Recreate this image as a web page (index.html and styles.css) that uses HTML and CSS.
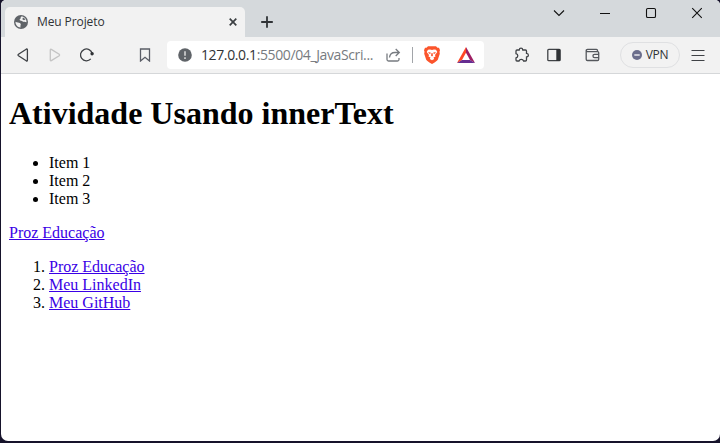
FILE: index.html
```html
<!DOCTYPE html>
<html lang="pt-BR">
<head>
<meta charset="utf-8">
<title>Meu Projeto</title>
<link rel="stylesheet" href="styles.css">
</head>
<body>
<div class="window">
  <header class="tabs">
    <div class="tab">
      <svg class="globe" width="14" height="14" viewBox="0 0 14 14"><circle cx="7" cy="7" r="7" fill="#5f6368"/><path d="M1.500 6.700C3 7.800 4.800 7 6.200 8.200S6 10.200 6.600 12.400C3.600 12.200 1.400 9.800 1.500 6.700ZM7.300 1.600C6 2.700 7.400 3.500 5.600 4.400 5 5.300 7 5.500 8.300 6.200 9.700 7.400 11 6.600 12.500 7.200 12.700 4.200 10.300 1.500 7.300 1.600Z" fill="#f2f2f2"/><path d="M9 2.500 8.300 4.300 10 5.200 11.600 4.300Z" fill="#5f6368"/></svg>
      <span class="tab-title">Meu Projeto</span>
      <svg class="tab-close" width="8" height="8" viewBox="0 0 8 8"><path d="M.7.7 7.300 7.300M7.300.7.7 7.300" stroke="#3c4043" stroke-width="1.700"/></svg>
    </div>
    <svg class="plus" width="12" height="12" viewBox="0 0 12 12"><path d="M6 .2V11.800M.2 6H11.800" stroke="#303336" stroke-width="1.800"/></svg>
    <div class="controls">
      <svg width="12" height="12" viewBox="0 0 12 12"><path d="m1 3.500 5 5 5-5"/></svg>
      <svg width="12" height="12" viewBox="0 0 12 12"><path d="M1 6.500H11"/></svg>
      <svg width="12" height="12" viewBox="0 0 12 12"><rect x="1.500" y="1.500" width="9" height="9" rx="1.300"/></svg>
      <svg width="12" height="12" viewBox="0 0 12 12"><path d="m1.200 1.200 9.600 9.600m0-9.600-9.600 9.600"/></svg>
    </div>
  </header>
  <nav class="toolbar">
    <svg class="back" width="12" height="14" viewBox="0 0 12 14"><path d="M9.200 1.200Q10.400.6 10.400 2V12Q10.400 13.400 9.200 12.800L1.500 7.800Q.6 7 1.500 6.200Z"/></svg>
    <svg class="forward" width="12" height="14" viewBox="0 0 12 14"><path d="M1.300 2Q1.300.8 2.300 1.400L10.200 6.200Q11 7 10.200 7.800L2.300 12.600Q1.300 13.200 1.300 12Z"/></svg>
    <svg class="reload" width="14" height="14" viewBox="0 0 14 14"><path d="M10.800 10.900A5.900 5.900 0 1 1 12.200 5.500"/><circle cx="12.100" cy="5.700" r="1.700" fill="#303336" stroke="none"/></svg>
    <svg class="bookmark" width="12" height="14" viewBox="0 0 12 14"><path d="M1.500 1h9v12L6 9.300 1.500 13Z"/></svg>
    <div class="address">
      <svg class="info" width="14" height="14" viewBox="0 0 14 14"><circle cx="7" cy="7" r="6.800" fill="#5f6368"/><path d="M7 3.300v4.500M7 9.300v1.700" stroke="#ddd" stroke-width="1.500"/></svg>
      <span class="url"><b>127.0.0.1</b>:5500/04_JavaScri...</span>
      <svg class="share" width="15" height="14" viewBox="0 0 15 14"><path d="M1 5.500v6q0 1.500 1.500 1.500h9q1.500 0 1.500-1.500V10M3.500 9.500Q4 4.500 9 4.500h4M9.700 1l3.600 3.500-3.600 3.500"/></svg>
      <i class="divider"></i>
      <svg class="brave" width="16" height="18" viewBox="0 0 16 18"><path d="m4 .3h8l1.500 1.500 1.500-.1 1 2.500-.5 1.500.3 2-2 6Q13 15 8 18 3 15 2.200 13.700l-2-6 .3-2L0 4.200l1-2.500 1.500.1Z" fill="#fb542b"/><path d="M4 3.700 6 3.500l2 .5 2-.5 2 .2 1.300 2.200-2.300 3 .5 1.500-2 1 .7 1.500L8 14.300l-2.200-1.400.7-1.500-2-1 .5-1.500-2.300-3Z" fill="#fff"/><path d="m4.300 6 2.700.7L6 8 4.700 7.200Zm7.400 0-2.700.7L10 8l1.300-.8ZM7.500 7h1l.5 2.600L8 10.500 7 9.600Z" fill="#fb542b"/></svg>
      <svg class="bat" width="18" height="16" viewBox="0 0 18 16"><path d="M9 0 0 16 5 13 9 5.800Z" fill="#ff4724"/><path d="M9 0V5.800L13 13 18 16Z" fill="#9e1f63"/><path d="M0 16 5 13h8l5 3Z" fill="#662d91"/></svg>
    </div>
    <svg class="puzzle" width="16" height="16" viewBox="0 0 16 16"><path d="M3 3H5.200Q5.400 1.200 7 1.200T8.800 3H11.500Q12.500 3 12.500 4V6.400Q14.400 6.500 14.400 8.200T12.500 10V13Q12.500 14 11.500 14H9.600Q9 12.400 7.300 12.400T5 14H3Q2 14 2 13V11Q3.800 10.500 3.800 8.800T2 6.700V4Q2 3 3 3Z"/></svg>
    <svg class="sidebar" width="14" height="14" viewBox="0 0 14 14"><rect x=".8" y="1.300" width="12.400" height="11.400" rx="1"/><path d="M9.300 1H13v12H9.300Z" fill="#303336" stroke="none"/></svg>
    <svg class="wallet" width="16" height="14" viewBox="0 0 16 14"><path d="M12.500 3.500V2.500Q12.500 1.400 11.400 1.400H2.500Q1.200 1.400 1.200 2.600V11.200Q1.200 12.500 2.500 12.500H12.500Q13.700 12.500 13.700 11.300V4.700Q13.700 3.600 12.600 3.600H2.500Q1.200 3.600 1.200 2.600M14 6.300H9.500Q8 6.300 8 8t1.500 1.700H14"/></svg>
    <div class="vpn"><svg width="10" height="10" viewBox="0 0 10 10"><circle cx="5" cy="5" r="5" fill="#6b6e8c" stroke="none"/><path d="M2.300 5h5.400" stroke="#e8e8ee" stroke-width="1.500"/></svg><span>VPN</span></div>
    <svg class="menu" width="14" height="12" viewBox="0 0 14 12"><path d="M.5 1.500h13M.5 6.500h13M.5 11.500h13"/></svg>
  </nav>
  <main>
    <h1>Atividade Usando innerText</h1>
    <ul><li>Item 1</li><li>Item 2</li><li>Item 3</li></ul>
    <a href="#">Proz Educação</a>
    <ol><li><a href="#">Proz Educação</a></li><li><a href="#">Meu LinkedIn</a></li><li><a href="#">Meu GitHub</a></li></ol>
  </main>
</div>
</body>
</html>
```
FILE: styles.css
```css
* { box-sizing: border-box; }
html { background: #16132b; }
body { margin: 0; height: 443px; padding: 0 0 2px 1px; overflow: hidden; background: #16132b; }
svg { display: block; flex: none; fill: none; }
.window { height: 441px; background: #fff; border-radius: 5px 5px 7px 7px; overflow: hidden; display: flex; flex-direction: column; }
.tabs { height: 37px; flex: none; background: #d5d9dc; display: flex; padding-left: 4px; }
.tab { width: 240px; height: 30px; margin-top: 7px; background: #f2f2f2; border-radius: 5px 5px 0 0; display: flex; align-items: center; padding: 0 8px 0 9px; }
.tab-title { flex: 1; margin-left: 9px; font: 12px/16px "Open Sans", "Noto Sans", sans-serif; color: #303336; letter-spacing: -.1px; }
.plus { margin: 16px 0 0 16px; }
.controls { display: flex; gap: 34px; margin: 7px 17px 0 auto; }
.controls svg { stroke: #111; stroke-width: 1.100; }
.toolbar { height: 37px; flex: none; background: #f2f2f2; border-bottom: 1px solid #d5d7d9; display: flex; align-items: center; stroke: #3f4246; stroke-width: 1.300; }
.back { margin-left: 16px; }
.forward { margin-left: 20px; stroke: #c4c4c4; }
.reload { margin-left: 19px; }
.bookmark { margin-left: 45px; stroke: #5a5d66; }
.address { margin-left: 16px; width: 317px; height: 28px; background: #fff; border-radius: 4px; display: flex; align-items: center; padding-left: 11px; }
.address svg { stroke: none; }
.url { width: 174px; margin-left: 9px; font: 14px/20px "Open Sans", "Noto Sans", sans-serif; color: #777b80; white-space: nowrap; letter-spacing: -.38px; }
.url b { font-weight: 400; color: #303336; }
.address .share { margin-left: 11px; stroke: #777b80; }
.divider { width: 1px; height: 16px; background: #a2a5a9; margin-left: 11px; }
.brave { margin-left: 11px; }
.bat { margin-left: 17px; }
.puzzle { margin-left: 30px; }
.sidebar { margin-left: 17px; }
.wallet { margin-left: 24px; stroke: #55585d; }
.vpn { width: 60px; height: 26px; margin-left: 19px; border: 1px solid #dfe0e2; border-radius: 13px; display: flex; align-items: center; justify-content: center; gap: 4px; font: 12px/16px "Open Sans", "Noto Sans", sans-serif; color: #303336; letter-spacing: -.3px; }
.menu { margin-left: 11px; stroke: #3f4246; stroke-width: 1.200; }
main { padding: 0 8px; font: 16px/18px "Liberation Serif", "Times New Roman", serif; color: #000; }
h1 { margin: 21px 0 22px; font-size: 32px; line-height: 37px; }
ul, ol { margin: 16px 0; padding-left: 40px; }
a { color: #3a00e6; text-decoration: underline; }
```
